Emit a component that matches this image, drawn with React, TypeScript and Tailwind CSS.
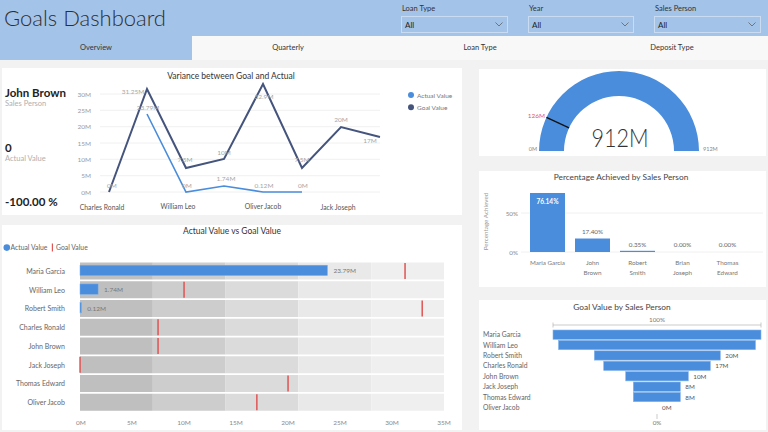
import React from "react";

const BLUE = "#4a8ddc";
const NAVY = "#44547d";

function Filter({ label, className }: { label: string; className: string }) {
  return (
    <div className={className}>
      <div className="text-[7.5px] leading-[10px] pl-[1px] text-[#333]">{label}</div>
      <div className="mt-[2px] h-[17px] border border-[#cadcf2] flex items-center justify-between pl-[3px] pr-[4px]">
        <span className="text-[8px] text-[#222]">All</span>
        <svg width="8" height="5" viewBox="0 0 8 5">
          <path d="M0.5 0.5 L4 4 L7.5 0.5" fill="none" stroke="#555" strokeWidth="0.7" />
        </svg>
      </div>
    </div>
  );
}

function LineChart() {
  const ys = [
    { l: "30M", y: 94 },
    { l: "25M", y: 110.3 },
    { l: "20M", y: 126.7 },
    { l: "15M", y: 143 },
    { l: "10M", y: 159.3 },
    { l: "5M", y: 175.7 },
    { l: "0M", y: 192 },
  ];
  const goal = "109,192 147,89 186,168 224,159 263,84 302,168 341,127 380,137";
  const actual = "147,114 186,192 224,186 263,192 302,192";
  const lbl = "#a6a6a6";
  return (
    <svg width="390" height="147" viewBox="72 68 390 147" className="block">
      <text x="231" y="79" fontSize="8.5" textAnchor="middle" fill="#333">
        Variance between Goal and Actual
      </text>
      {ys.map((g) => (
        <g key={g.l}>
          <line x1="100" x2="380" y1={g.y} y2={g.y} stroke="#ececec" strokeWidth="0.8" />
          <text x="91" y={g.y + 2.5} fontSize="6.5" textAnchor="end" fill="#9a9a9a">
            {g.l}
          </text>
        </g>
      ))}
      <polyline points={goal} fill="none" stroke={NAVY} strokeWidth="2" strokeLinejoin="miter" />
      <polyline points={actual} fill="none" stroke={BLUE} strokeWidth="1.6" />
      <g fontSize="6.5" fill={lbl} textAnchor="middle">
        <text x="112" y="188">0M</text>
        <text x="133" y="94">31.25M</text>
        <text x="148" y="110">23.79M</text>
        <text x="185" y="162">7.5M</text>
        <text x="224" y="155">10M</text>
        <text x="264" y="99">32.9M</text>
        <text x="302" y="162">7.5M</text>
        <text x="341" y="122">20M</text>
        <text x="370" y="143">17M</text>
        <text x="187" y="188">0M</text>
        <text x="226" y="181">1.74M</text>
        <text x="264" y="188">0.12M</text>
        <text x="303" y="188">0M</text>
      </g>
      <g fontSize="6.8" fill="#555" textAnchor="middle">
        <text x="102" y="210">Charles Ronald</text>
        <text x="178" y="209">William Leo</text>
        <text x="263" y="209">Oliver Jacob</text>
        <text x="338" y="210">Jack Joseph</text>
      </g>
      <circle cx="411" cy="95" r="3" fill={BLUE} />
      <text x="417" y="97.5" fontSize="6.5" fill="#777">Actual Value</text>
      <circle cx="411" cy="107.3" r="3" fill={NAVY} />
      <text x="417" y="109.8" fontSize="6.5" fill="#777">Goal Value</text>
    </svg>
  );
}

function BulletChart() {
  const rows = [
    { n: "Maria Garcia", a: 23.79, g: 31.25, l: "23.79M" },
    { n: "William Leo", a: 1.74, g: 10, l: "1.74M" },
    { n: "Robert Smith", a: 0.12, g: 32.9, l: "0.12M" },
    { n: "Charles Ronald", a: null, g: 7.5, l: "" },
    { n: "John Brown", a: null, g: 7.5, l: "" },
    { n: "Jack Joseph", a: null, g: 0, l: "" },
    { n: "Thomas Edward", a: null, g: 20, l: "" },
    { n: "Oliver Jacob", a: null, g: 17, l: "" },
  ];
  const X = (v: number) => 80 + v * 10.4;
  const bands = ["#bfbfbf", "#cdcdcd", "#dbdbdb", "#e9e9e9", "#efefef"];
  const ticks = [0, 5, 10, 15, 20, 25, 30, 35];
  return (
    <svg width="460" height="205" viewBox="2 225 460 205" className="block">
      <text x="232" y="234" fontSize="8.5" textAnchor="middle" fill="#333">
        Actual Value vs Goal Value
      </text>
      <circle cx="6.8" cy="247.6" r="3.3" fill={BLUE} />
      <text x="10.5" y="250" fontSize="6.8" fill="#666">Actual Value</text>
      <rect x="51.8" y="243.5" width="1.2" height="8" fill="#e05555" />
      <text x="56" y="250" fontSize="6.8" fill="#666">Goal Value</text>
      {rows.map((r, i) => {
        const top = 262.5 + i * 18.75;
        return (
          <g key={r.n}>
            {bands.map((c, b) => (
              <rect key={b} x={X(b * 7)} y={top} width={72.8} height={17} fill={c} />
            ))}
            <text x="65" y={top + 11.3} fontSize="7" textAnchor="end" fill="#666">
              {r.n}
            </text>
            {r.a !== null && (
              <>
                <rect
                  x="80"
                  y={top + 2.7}
                  width={Math.max(r.a * 10.4, 1.4)}
                  height="10.3"
                  fill={BLUE}
                  stroke="#78aee8"
                  strokeWidth="0.5"
                />
                <text x={X(r.a) + 6} y={top + 10.6} fontSize="6.5" fill="#777">
                  {r.l}
                </text>
              </>
            )}
            <rect x={X(r.g) - 0.7} y={top + 0.5} width="1.5" height="16" fill="#e05555" />
          </g>
        );
      })}
      {ticks.map((t) => (
        <text key={t} x={t === 0 ? 81 : X(t)} y="424.5" fontSize="6.5" textAnchor="middle" fill="#8a8a8a">
          {t}M
        </text>
      ))}
    </svg>
  );
}

function Gauge() {
  const cx = 619,
    cy = 151,
    R = 80,
    r = 55;
  const a = (126 / 912) * Math.PI;
  const ox = cx - R * Math.cos(a),
    oy = cy - R * Math.sin(a);
  const ix = cx - r * Math.cos(a),
    iy = cy - r * Math.sin(a);
  return (
    <svg width="287" height="87" viewBox="479 69 287 87" className="block">
      <path
        d={`M ${cx - R} ${cy} A ${R} ${R} 0 0 1 ${cx + R} ${cy} L ${cx + r} ${cy} A ${r} ${r} 0 0 0 ${cx - r} ${cy} Z`}
        fill={BLUE}
      />
      <line x1={ox} y1={oy} x2={ix} y2={iy} stroke="#111" strokeWidth="1.4" />
      <text x="545" y="117.5" fontSize="6.5" textAnchor="end" fill="#e05a5a">126M</text>
      <text x="537" y="151" fontSize="5.5" textAnchor="end" fill="#888">0M</text>
      <text x="703" y="151" fontSize="5.5" fill="#888">912M</text>
      <text
        x="620"
        y="147"
        fontSize="26"
        textAnchor="middle"
        fill="#333"
        fontWeight="300"
        textLength="57"
        lengthAdjust="spacingAndGlyphs"
      >
        912M
      </text>
    </svg>
  );
}

function PctChart() {
  const data = [
    { a: "Maria Garcia", b: "", v: 76.14, l: "76.14%" },
    { a: "John", b: "Brown", v: 17.4, l: "17.40%" },
    { a: "Robert", b: "Smith", v: 0.35, l: "0.35%" },
    { a: "Brian", b: "Joseph", v: 0, l: "0.00%" },
    { a: "Thomas", b: "Edward", v: 0, l: "0.00%" },
  ];
  const base = 252;
  const k = 0.775;
  return (
    <svg width="287" height="116" viewBox="479 171 287 116" className="block">
      <text x="621" y="180" fontSize="8.3" textAnchor="middle" fill="#444">
        Percentage Achieved by Sales Person
      </text>
      <line x1="521" x2="763" y1="213" y2="213" stroke="#ececec" strokeWidth="0.8" />
      <line x1="521" x2="763" y1="252" y2="252" stroke="#ececec" strokeWidth="0.8" />
      <text x="518" y="215.5" fontSize="6.3" textAnchor="end" fill="#888">50%</text>
      <text x="518" y="254.5" fontSize="6.3" textAnchor="end" fill="#888">0%</text>
      <text
        x="487.5"
        y="221.5"
        fontSize="6.3"
        textAnchor="middle"
        fill="#999"
        transform="rotate(-90 487.5 221.5)"
      >
        Percentage Achieved
      </text>
      {data.map((d, i) => {
        const c = 547.5 + i * 45;
        const h = Math.max(d.v * k, d.v > 0 ? 1.2 : 0);
        return (
          <g key={d.a}>
            {h > 0 && <rect x={c - 17.5} y={base - h} width="35" height={h} fill={BLUE} />}
            {i === 0 ? (
              <text x={c} y="204" fontSize="6.5" textAnchor="middle" fill="#fff" fontWeight="700">
                {d.l}
              </text>
            ) : (
              <text x={c} y={i === 1 ? 233.5 : 246.5} fontSize="6.3" textAnchor="middle" fill="#666">
                {d.l}
              </text>
            )}
            <text x={c} y="265" fontSize="6.3" textAnchor="middle" fill="#777">
              {d.a}
            </text>
            {d.b && (
              <text x={c} y="275" fontSize="6.3" textAnchor="middle" fill="#777">
                {d.b}
              </text>
            )}
          </g>
        );
      })}
    </svg>
  );
}

function Funnel() {
  const rows = [
    { n: "Maria Garcia", x1: 553, x2: 761, l: "" },
    { n: "William Leo", x1: 558.5, x2: 755.5, l: "" },
    { n: "Robert Smith", x1: 594.3, x2: 720.3, l: "20M" },
    { n: "Charles Ronald", x1: 603.7, x2: 710.3, l: "17M" },
    { n: "John Brown", x1: 625.7, x2: 688.3, l: "10M" },
    { n: "Jack Joseph", x1: 633.3, x2: 680.3, l: "8M" },
    { n: "Thomas Edward", x1: 633.3, x2: 680.3, l: "8M" },
    { n: "Oliver Jacob", x1: 657, x2: 657, l: "0M" },
  ];
  return (
    <svg width="287" height="130" viewBox="479 300 287 130" className="block">
      <text x="622" y="309.5" fontSize="8.3" textAnchor="middle" fill="#444">
        Goal Value by Sales Person
      </text>
      <text x="657" y="321.5" fontSize="6.3" textAnchor="middle" fill="#777">100%</text>
      <line x1="553" x2="761" y1="325" y2="325" stroke="#aaa" strokeWidth="0.6" />
      <line x1="553" x2="553" y1="322.5" y2="327.5" stroke="#aaa" strokeWidth="0.6" />
      <line x1="761" x2="761" y1="322.5" y2="327.5" stroke="#aaa" strokeWidth="0.6" />
      {rows.map((r, i) => {
        const top = 330 + i * 10.4;
        const cyy = top + 4.7;
        return (
          <g key={r.n}>
            <text x="483" y={cyy + 2.4} fontSize="6.8" fill="#666">
              {r.n}
            </text>
            {r.x2 > r.x1 && (
              <rect
                x={r.x1}
                y={top}
                width={r.x2 - r.x1}
                height="9.3"
                fill={BLUE}
                stroke="#86b5ea"
                strokeWidth="0.6"
              />
            )}
            {r.l && (
              <text x={i === 7 ? 662 : r.x2 + 5} y={cyy + 2.4} fontSize="6.3" fill="#555">
                {r.l}
              </text>
            )}
          </g>
        );
      })}
      <line x1="657" x2="657" y1="414" y2="419" stroke="#aaa" strokeWidth="0.6" />
      <text x="657" y="425" fontSize="6.3" textAnchor="middle" fill="#777">0%</text>
    </svg>
  );
}

export default function App() {
  return (
    <div className="w-[768px] h-[432px] bg-[#f2f2f2] overflow-hidden font-['Lato','Open_Sans',sans-serif] text-[#333]">
      <header className="h-[36px] bg-[#a4c3e8] flex">
        <div className="flex-1 pl-[4px] pt-[3px] text-[22px] leading-[30px] font-light text-[#2f2f2f]">
          Goals Dashboard
        </div>
        <div className="flex gap-[20px] mr-[7px] pt-[4px]">
          <Filter label="Loan Type" className="w-[107px]" />
          <Filter label="Year" className="w-[106px]" />
          <Filter label="Sales Person" className="w-[107px]" />
        </div>
      </header>
      <nav className="h-[24px] flex text-[7.5px] text-[#333]">
        <div className="w-[192px] bg-[#a4c3e8] flex items-center justify-center">Overview</div>
        <div className="w-[192px] bg-[#f8f8f8] flex items-center justify-center">Quarterly</div>
        <div className="w-[192px] bg-[#f8f8f8] flex items-center justify-center">Loan Type</div>
        <div className="w-[192px] bg-[#f8f8f8] flex items-center justify-center">Deposit Type</div>
      </nav>
      <main className="flex pt-[8px] pl-[2px]">
        <div className="w-[460px] flex flex-col gap-[10px]">
          <section className="h-[147px] bg-white flex">
            <div className="w-[70px] pl-[3px] flex flex-col">
              <div className="mt-[18px] text-[11.5px] leading-[13px] font-bold text-[#222]">John Brown</div>
              <div className="text-[7.5px] leading-[10px] text-[#b0b0b0]">Sales Person</div>
              <div className="mt-[32px] text-[11.5px] leading-[13px] font-bold text-[#222]">0</div>
              <div className="text-[7.5px] leading-[10px] text-[#b0b0b0]">Actual Value</div>
              <div className="mt-[31px] text-[11.5px] leading-[13px] font-bold text-[#222]">-100.00 %</div>
            </div>
            <LineChart />
          </section>
          <section className="h-[205px] bg-white">
            <BulletChart />
          </section>
        </div>
        <div className="ml-[17px] w-[287px] flex flex-col pt-[1px]">
          <section className="h-[87px] bg-white">
            <Gauge />
          </section>
          <section className="mt-[15px] h-[116px] bg-white">
            <PctChart />
          </section>
          <section className="mt-[13px] h-[130px] bg-white">
            <Funnel />
          </section>
        </div>
      </main>
    </div>
  );
}
